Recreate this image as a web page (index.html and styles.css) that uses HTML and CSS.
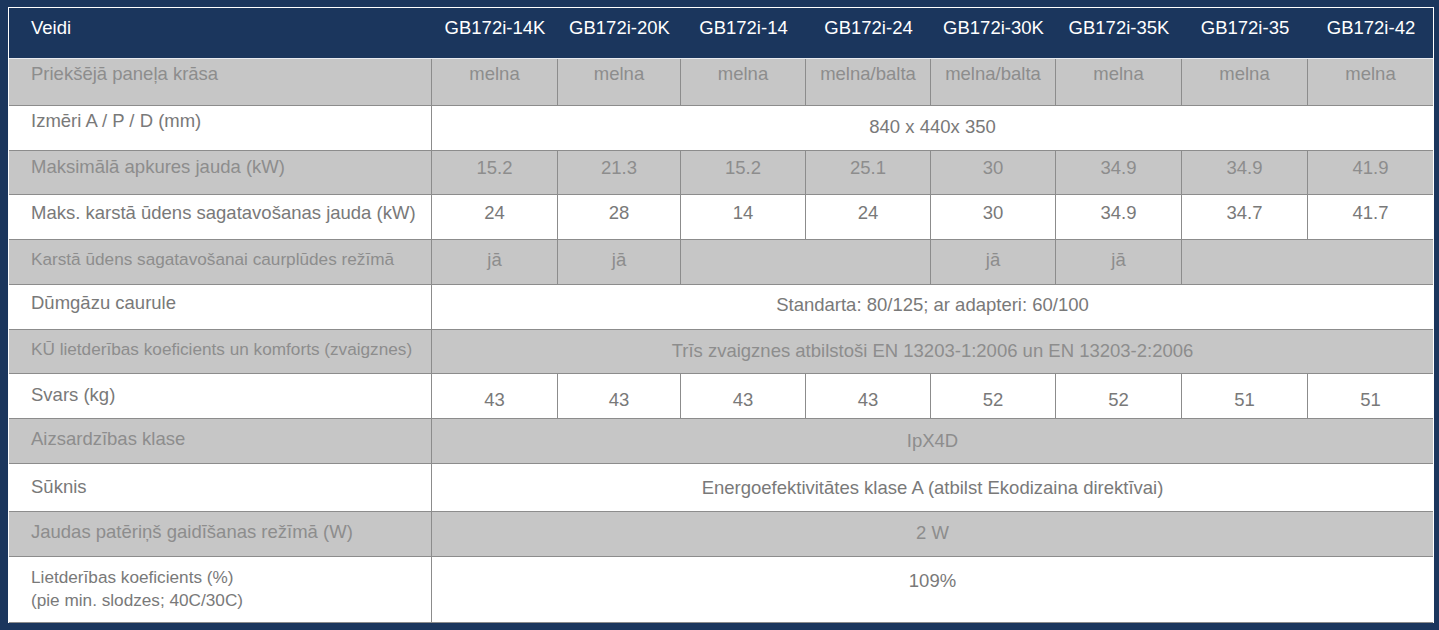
FILE: index.html
```html
<!DOCTYPE html>
<html lang="lv">
<head>
<meta charset="utf-8">
<title>GB172i</title>
<link rel="stylesheet" href="styles.css">
</head>
<body>
<div class="frame">
<table class="spec">
  <colgroup>
    <col class="c-label">
    <col class="c-wide"><col class="c-narrow"><col class="c-mid"><col class="c-mid">
    <col class="c-mid"><col class="c-wide"><col class="c-wide"><col class="c-wide">
  </colgroup>
  <thead>
    <tr class="head">
      <th class="lbl">Veidi</th>
      <th>GB172i-14K</th><th>GB172i-20K</th><th>GB172i-14</th><th>GB172i-24</th>
      <th>GB172i-30K</th><th>GB172i-35K</th><th>GB172i-35</th><th>GB172i-42</th>
    </tr>
  </thead>
  <tbody>
    <tr class="gray r1">
      <td class="lbl">Priekšējā paneļa krāsa</td>
      <td>melna</td><td>melna</td><td>melna</td><td>melna/balta</td><td>melna/balta</td><td>melna</td><td>melna</td><td>melna</td>
    </tr>
    <tr class="r2">
      <td class="lbl">Izmēri A / P / D (mm)</td>
      <td colspan="8">840 x 440x 350</td>
    </tr>
    <tr class="gray r3">
      <td class="lbl">Maksimālā apkures jauda (kW)</td>
      <td>15.2</td><td>21.3</td><td>15.2</td><td>25.1</td><td>30</td><td>34.9</td><td>34.9</td><td>41.9</td>
    </tr>
    <tr class="r4">
      <td class="lbl">Maks. karstā ūdens sagatavošanas jauda (kW)</td>
      <td>24</td><td>28</td><td>14</td><td>24</td><td>30</td><td>34.9</td><td>34.7</td><td>41.7</td>
    </tr>
    <tr class="gray r5">
      <td class="lbl small">Karstā ūdens sagatavošanai caurplūdes režīmā</td>
      <td>jā</td><td>jā</td><td colspan="2"></td><td>jā</td><td>jā</td><td colspan="2"></td>
    </tr>
    <tr class="r6">
      <td class="lbl">Dūmgāzu caurule</td>
      <td colspan="8">Standarta: 80/125; ar adapteri: 60/100</td>
    </tr>
    <tr class="gray r7">
      <td class="lbl small">KŪ lietderības koeficients un komforts (zvaigznes)</td>
      <td colspan="8">Trīs zvaigznes atbilstoši EN 13203-1:2006 un EN 13203-2:2006</td>
    </tr>
    <tr class="r8">
      <td class="lbl">Svars (kg)</td>
      <td>43</td><td>43</td><td>43</td><td>43</td><td>52</td><td>52</td><td>51</td><td>51</td>
    </tr>
    <tr class="gray r9">
      <td class="lbl">Aizsardzības klase</td>
      <td colspan="8">IpX4D</td>
    </tr>
    <tr class="r10">
      <td class="lbl">Sūknis</td>
      <td colspan="8">Energoefektivitātes klase A (atbilst Ekodizaina direktīvai)</td>
    </tr>
    <tr class="gray r11">
      <td class="lbl">Jaudas patēriņš gaidīšanas režīmā (W)</td>
      <td colspan="8">2 W</td>
    </tr>
    <tr class="r12">
      <td class="lbl small two">Lietderības koeficients (%)<br>(pie min. slodzes; 40C/30C)</td>
      <td colspan="8">109%</td>
    </tr>
  </tbody>
</table>
</div>
</body>
</html>
```

FILE: styles.css
```css
html, body {
  margin: 0;
  padding: 0;
  background: #1b365d;
}

body {
  padding: 7px 0 0 8px;
  font-family: "Liberation Sans", Arial, sans-serif;
}

.frame {
  width: 1424px;
  border: 1px solid #ffffff;
  border-bottom: none;
}

.spec {
  width: 1424px;
  table-layout: fixed;
  border-collapse: separate;
  border-spacing: 0;
  font-size: 18.5px;
  line-height: 20px;
}

.c-label  { width: 422px; }
.c-wide   { width: 126px; }
.c-narrow { width: 123px; }
.c-mid    { width: 125px; }

.head {
  height: 51px;
}

.head th {
  background: #1b365d;
  color: #ffffff;
  font-weight: normal;
  text-align: center;
  vertical-align: top;
  padding: 10px 0 0 2px;
  border-bottom: 1px solid #e8ebf0;
  white-space: nowrap;
}

.head th.lbl {
  text-align: left;
  padding-left: 22px;
}

tbody tr {
  --h: 45px;
  --lp: 8px;
  --vp: 10px;
  height: var(--h);
  background: #ffffff;
  color: #797979;
}

tbody tr.gray {
  background: #c6c6c6;
  color: #8d8d8d;
}

tbody td {
  padding: var(--vp) 0 0;
  text-align: center;
  vertical-align: top;
  border-bottom: 1px solid #8c8c8c;
  border-left: 1px solid #8c8c8c;
  white-space: nowrap;
}

tbody td.lbl {
  text-align: left;
  padding: var(--lp) 0 0 22px;
  border-left: none;
}

td.small {
  font-size: 17.2px;
}

td.two {
  line-height: 23px;
}

.r1  { --h: 47px; --lp: 5px;  --vp: 5px; }
.r2  { --h: 45px; --lp: 5px;  --vp: 11px; }
.r3  { --h: 44px; --lp: 6px;  --vp: 7px; }
.r4  { --h: 45px; --lp: 8px;  --vp: 8px; }
.r5  { --h: 45px; --lp: 9px;  --vp: 10px; }
.r6  { --h: 45px; --lp: 8px;  --vp: 10px; }
.r7  { --h: 44px; --lp: 9px;  --vp: 11px; }
.r8  { --h: 45px; --lp: 11px; --vp: 16px; }
.r9  { --h: 45px; --lp: 10px; --vp: 12px; }
.r10 { --h: 48px; --lp: 13px; --vp: 14px; }
.r11 { --h: 45px; --lp: 10px; --vp: 11px; }
.r12 { --h: 66px; --lp: 9px;  --vp: 14px; }
```
